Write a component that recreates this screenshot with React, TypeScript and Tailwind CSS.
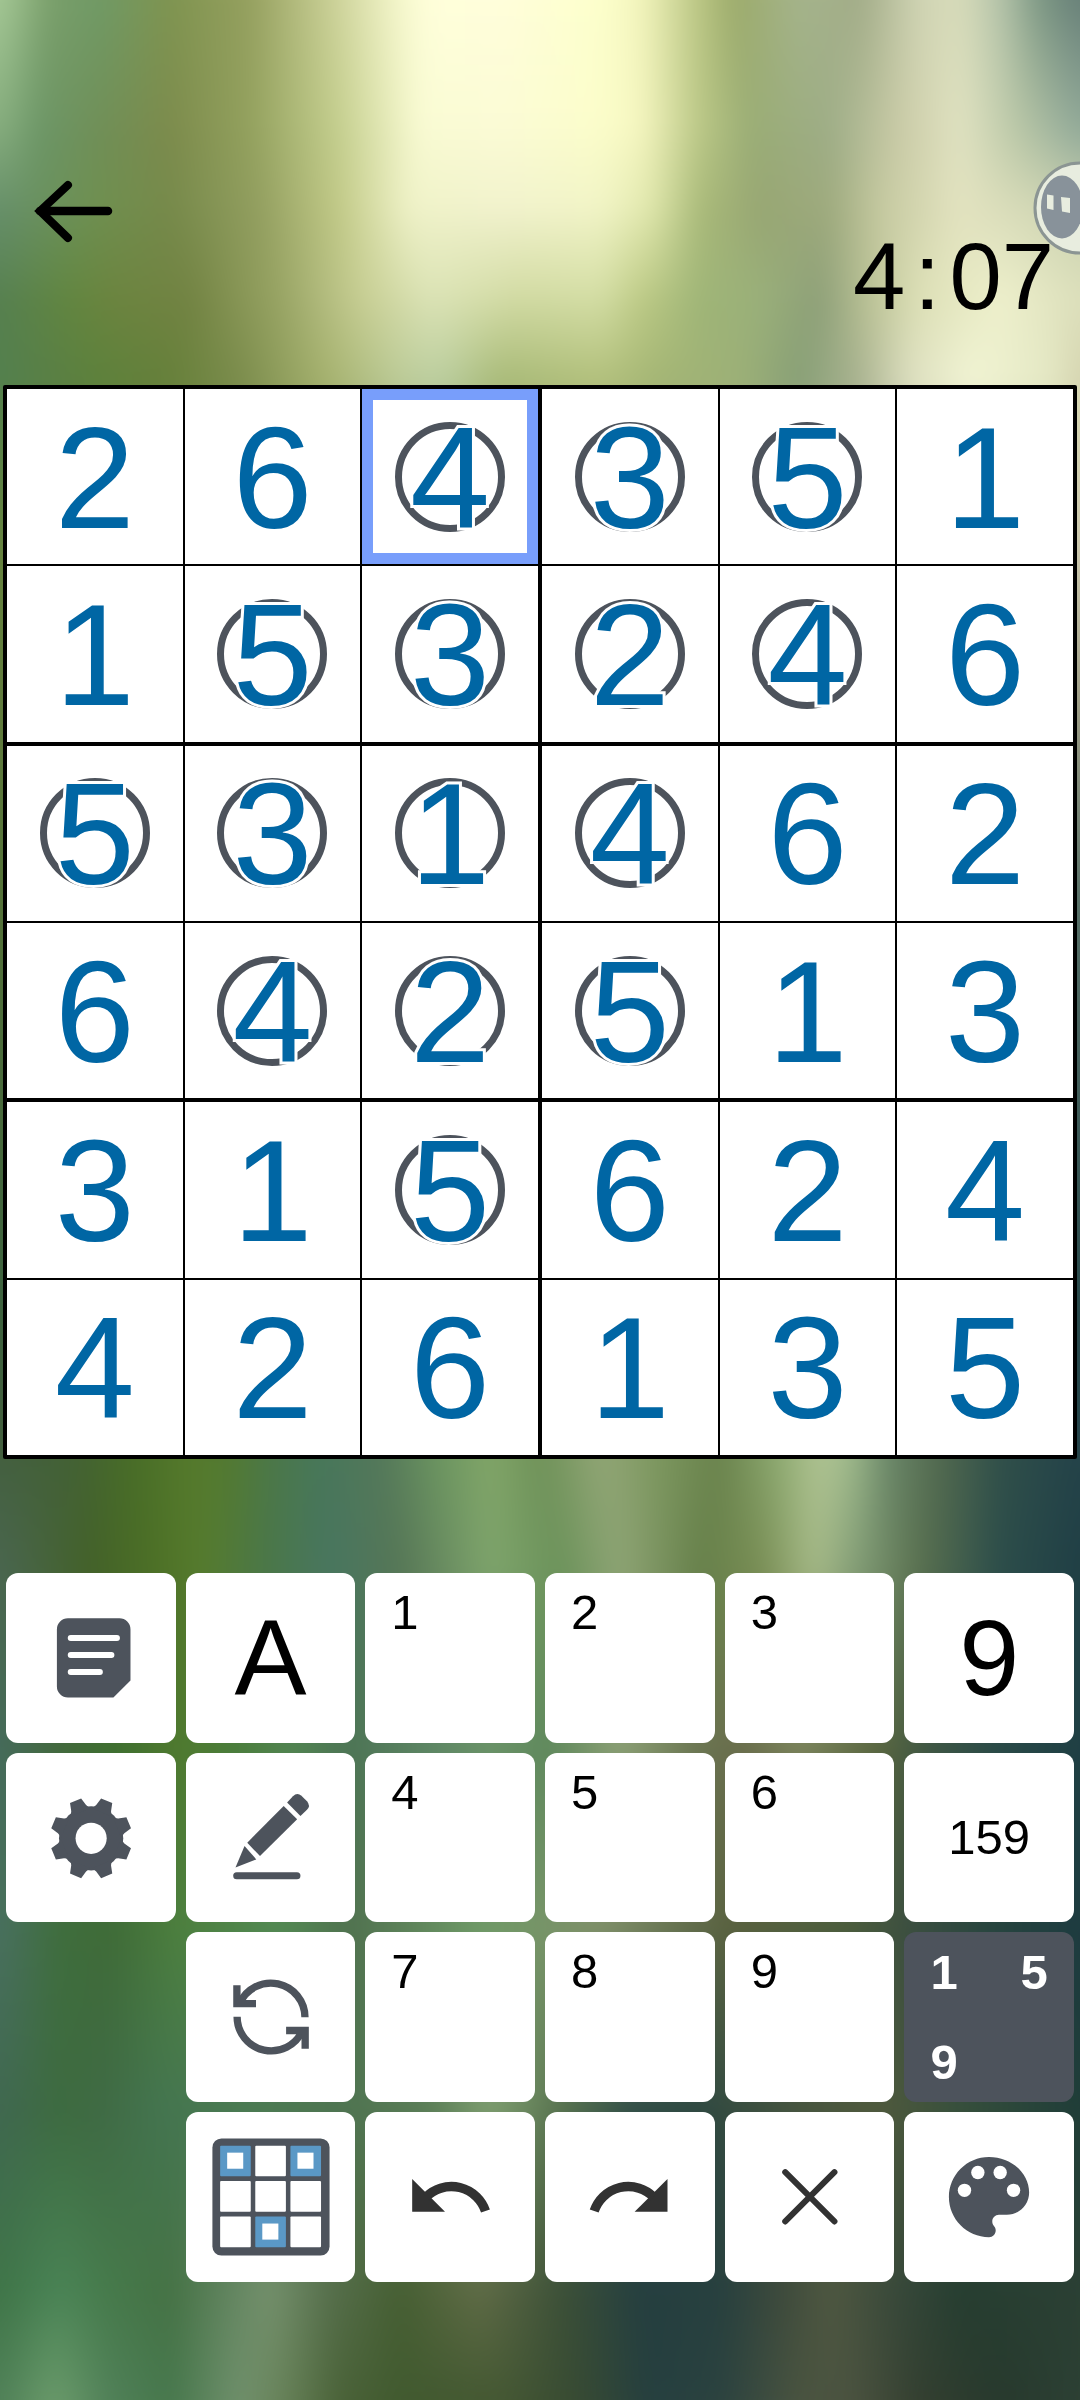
import React, { useState } from 'react'

type Stop = [x: number, color: string]

// Wallpaper: horizontal colour rows that fade into each other from top to bottom
const wallpaper: { y: number; stops: Stop[] }[] = [
  { y: 0, stops: [[0, '#a5c896'], [50, '#7a9f6b'], [100, '#709a66'], [170, '#7f9450'], [250, '#95a05f'], [330, '#c9cf95'], [400, '#f5f7cc'], [430, '#ffffdb'], [500, '#fffedb'], [600, '#fdffcc'], [640, '#f3f5bd'], [700, '#b9c583'], [735, '#9cab6b'], [800, '#a5b48c'], [860, '#a2ac88'], [920, '#d0d4b4'], [960, '#d8dcba'], [1000, '#b5c4aa'], [1040, '#7d9884'], [1080, '#688079']] },
  { y: 130, stops: [[0, '#86ad7e'], [40, '#6c9667'], [100, '#708f57'], [170, '#7c8b4c'], [250, '#93a15e'], [340, '#c5cf8f'], [420, '#f9fbd3'], [500, '#fbfbd5'], [600, '#fbfdca'], [640, '#f5f6c0'], [700, '#bac786'], [750, '#9aad75'], [830, '#9ead87'], [900, '#cacba7'], [960, '#e0e2c1'], [1020, '#b8c6a6'], [1080, '#92aa99']] },
  { y: 210, stops: [[0, '#668f6a'], [60, '#6b9159'], [100, '#6f8f4f'], [170, '#76894a'], [260, '#939f60'], [340, '#c2ca88'], [410, '#eff2c8'], [500, '#f1f2cd'], [600, '#f1f4c6'], [650, '#e0e7ac'], [700, '#a9ba79'], [760, '#97a673'], [830, '#9eaa7e'], [880, '#c5c9a0'], [960, '#e3e3c0'], [1080, '#cad2b0']] },
  { y: 300, stops: [[0, '#568050'], [70, '#628640'], [110, '#6b843f'], [190, '#728343'], [280, '#98a464'], [360, '#c6cd92'], [430, '#dbe3b6'], [520, '#d0d9a1'], [600, '#d3dda4'], [640, '#bdca86'], [700, '#9fb577'], [760, '#9ab07a'], [820, '#8d9f78'], [870, '#bcc397'], [920, '#dde0b7'], [1000, '#eef0cc'], [1080, '#dcdfbb']] },
  { y: 380, stops: [[0, '#53804e'], [60, '#5a7f43'], [90, '#5c813c'], [170, '#66803a'], [240, '#7b8c4c'], [330, '#a7b370'], [400, '#bccb98'], [440, '#bbcea0'], [500, '#a8ba78'], [600, '#b2c07c'], [660, '#a3b574'], [740, '#9cb077'], [800, '#879f76'], [860, '#aab391'], [910, '#dddfc0'], [970, '#f1f4d4'], [1050, '#e4e8c4'], [1080, '#d5d4b0']] },
  { y: 550, stops: [[0, '#66833f'], [1080, '#cdc9b0']] },
  { y: 700, stops: [[0, '#617c3d'], [1080, '#a09f88']] },
  { y: 900, stops: [[0, '#547239'], [1080, '#587068']] },
  { y: 1300, stops: [[0, '#3e633f'], [1080, '#28484a']] },
  { y: 1440, stops: [[0, '#435f3e'], [70, '#436136'], [130, '#486d28'], [190, '#557a2c'], [230, '#537a31'], [270, '#4c7848'], [320, '#47775a'], [380, '#54785a'], [440, '#6d9761'], [490, '#82a668'], [540, '#6f9158'], [600, '#93a777'], [660, '#7c975e'], [720, '#6a834d'], [780, '#90ad74'], [820, '#b2c594'], [850, '#a2bd8e'], [890, '#698669'], [940, '#52694f'], [1000, '#31504a'], [1080, '#24434a']] },
  { y: 1570, stops: [[0, '#4a6650'], [90, '#436129'], [150, '#4c6f26'], [200, '#567b2d'], [270, '#4a774a'], [330, '#487660'], [400, '#567656'], [490, '#7ea46c'], [560, '#6b925a'], [620, '#8ea475'], [700, '#66804a'], [760, '#788d54'], [815, '#a5b987'], [860, '#7f9a74'], [920, '#59704f'], [1000, '#2c4d4a'], [1080, '#203f45']] },
  { y: 1750, stops: [[0, '#456b5c'], [60, '#43693d'], [110, '#3d6f31'], [180, '#507a2f'], [230, '#4a7c3a'], [290, '#528551'], [350, '#4d7455'], [430, '#5d8665'], [490, '#6a9268'], [550, '#5e885c'], [620, '#8ca076'], [700, '#6a7451'], [740, '#696c4c'], [800, '#7b835c'], [880, '#58653f'], [930, '#3e5644'], [1000, '#2a4a48'], [1080, '#1f3f44']] },
  { y: 1930, stops: [[0, '#49705f'], [60, '#3f6e3d'], [110, '#3f6b38'], [180, '#4d803f'], [280, '#538a54'], [350, '#50714f'], [480, '#6f9a67'], [600, '#80906a'], [700, '#5f6a49'], [730, '#59613f'], [850, '#4a5c3d'], [910, '#3b4e40'], [1000, '#26443f'], [1080, '#1d3b40']] },
  { y: 2110, stops: [[0, '#406850'], [60, '#3d6b40'], [100, '#3f6a44'], [160, '#447550'], [250, '#4a7a52'], [350, '#4f7451'], [430, '#5b7e58'], [490, '#7f9f71'], [560, '#58734f'], [630, '#324f48'], [700, '#2e4841'], [800, '#475540'], [880, '#505a3d'], [960, '#37503c'], [1080, '#1f3d38']] },
  { y: 2290, stops: [[0, '#3f7548'], [60, '#4a8456'], [110, '#467a4b'], [170, '#457245'], [230, '#628560'], [270, '#75916d'], [330, '#566f4c'], [400, '#465f33'], [480, '#606c47'], [560, '#3d5138'], [640, '#253f40'], [720, '#27403f'], [780, '#3d4a3c'], [830, '#4f5841'], [900, '#37483a'], [960, '#263e31'], [1080, '#2b4034']] },
  { y: 2400, stops: [[0, '#4f8057'], [55, '#6b9b6b'], [110, '#508058'], [170, '#46774c'], [240, '#70906c'], [280, '#68835a'], [340, '#4a6238'], [400, '#415a2f'], [500, '#455833'], [580, '#374a33'], [650, '#253f3f'], [720, '#2b423f'], [800, '#4a5440'], [850, '#4b5340'], [920, '#333f30'], [1000, '#27392d'], [1080, '#2c4034']] },
]

// The rows run past every edge so that the blur has colour to pull in there
function Wallpaper() {
  return (
    <svg className="absolute inset-0 w-full h-full overflow-visible blur-md" viewBox="0 0 1080 2400" preserveAspectRatio="none" aria-hidden="true">
      <defs>
        <linearGradient id="fade" x1="0" y1="0" x2="0" y2="1">
          <stop offset="0" stopColor="#000" />
          <stop offset="1" stopColor="#fff" />
        </linearGradient>
        {wallpaper.map((row, i) => (
          <linearGradient key={i} id={`row${i}`} gradientUnits="userSpaceOnUse" x1="0" y1="0" x2="1080" y2="0">
            {row.stops.map(([x, color]) => (
              <stop key={x} offset={x / 1080} stopColor={color} />
            ))}
          </linearGradient>
        ))}
        {wallpaper.slice(1).map((row, i) => (
          <mask key={i} id={`mask${i + 1}`} maskUnits="userSpaceOnUse" x="-60" y="-60" width="1200" height="2520">
            <rect x="-60" y={wallpaper[i].y} width="1200" height={row.y - wallpaper[i].y} fill="url(#fade)" />
            <rect x="-60" y={row.y} width="1200" height={2460 - row.y} fill="#fff" />
          </mask>
        ))}
      </defs>
      {wallpaper.map((row, i) => (
        <rect key={i} x="-60" y="-60" width="1200" height="2520" fill={`url(#row${i})`} mask={i > 0 ? `url(#mask${i})` : undefined} />
      ))}
    </svg>
  )
}

// '*' marks a circled cell
const board = [
  ['2', '6', '4*', '3*', '5*', '1'],
  ['1', '5*', '3*', '2*', '4*', '6'],
  ['5*', '3*', '1*', '4*', '6', '2'],
  ['6', '4*', '2*', '5*', '1', '3'],
  ['3', '1', '5*', '6', '2', '4'],
  ['4', '2', '6', '1', '3', '5'],
]

function Cell({ value, label, selected, onSelect }: { value: string; label: string; selected: boolean; onSelect: () => void }) {
  const circled = value.endsWith('*')
  return (
    <button
      onClick={onSelect}
      aria-label={label}
      aria-pressed={selected}
      className={`relative flex items-center justify-center bg-white min-w-0 min-h-0 ${selected ? 'border-[11px] border-[#789efb]' : ''}`}
    >
      {circled && <span className="absolute inset-0 m-auto size-[110px] rounded-full border-[7px] border-[#4d535c]" />}
      <span className="relative pt-1 text-[144px] leading-none text-[#0066a4] [-webkit-text-stroke:6px_white] [paint-order:stroke_fill]">
        {value[0]}
      </span>
    </button>
  )
}

function Board() {
  const [selected, setSelected] = useState('0-2')

  return (
    <section aria-label="Board" className="mx-[3px] aspect-square bg-black rounded-[2px] p-1 grid grid-cols-2 grid-rows-3 gap-1">
      {[0, 1, 2, 3, 4, 5].map(box => {
        const top = Math.floor(box / 2) * 2
        const left = (box % 2) * 3
        return (
          <div key={box} className="grid grid-cols-3 grid-rows-2 gap-0.5 min-h-0">
            {[0, 1, 2, 3, 4, 5].map(i => {
              const r = top + Math.floor(i / 3)
              const c = left + (i % 3)
              const id = `${r}-${c}`
              return (
                <Cell
                  key={id}
                  value={board[r][c]}
                  label={`Row ${r + 1}, column ${c + 1}: ${board[r][c][0]}`}
                  selected={selected === id}
                  onSelect={() => setSelected(id)}
                />
              )
            })}
          </div>
        )
      })}
    </section>
  )
}

function Icon({ children }: { children: React.ReactNode }) {
  return (
    <svg viewBox="0 0 169 169" className="w-full h-full" fill="none" aria-hidden="true">
      {children}
    </svg>
  )
}

const ink = '#4d535c'

const NoteIcon = () => (
  <Icon>
    <path d="M61.7 45H113a11 11 0 0 1 11 11v51l-17 17H61.7a11 11 0 0 1-11-11V56a11 11 0 0 1 11-11z" fill={ink} />
    <path d="M64.5 64.7H110.5M64.5 81.7H105M64.5 98.7H93.5" stroke="#fff" strokeWidth="6" strokeLinecap="round" />
  </Icon>
)

const GearIcon = () => (
  <Icon>
    <circle cx="84.8" cy="85" r="32" fill={ink} />
    {[0, 1, 2, 3, 4, 5, 6, 7].map(k => (
      <path key={k} d="M-10.5 -28L-8 -32.5L-6 -40.5H6L8 -32.5L10.5 -28Z" fill={ink} transform={`translate(84.8 85) rotate(${22.5 + k * 45})`} />
    ))}
    <circle cx="84.8" cy="85" r="15.5" fill="#fff" />
  </Icon>
)

const PencilIcon = () => (
  <Icon>
    <path d="M49.3 114L58.3 92.7L70 106Z" fill={ink} />
    <path d="M61 89.3L97.3 52.7L110.7 66L73.7 102.7Z" fill={ink} />
    <path d="M100.7 49.3L106.5 43Q110.7 39 115 42.5L120.5 48Q124.5 52.5 120.5 56.5L114 62.7Z" fill={ink} />
    <path d="M50.5 122.3H110.5" stroke={ink} strokeWidth="7" strokeLinecap="round" />
  </Icon>
)

const SwapIcon = () => (
  <Icon>
    {[0, 180].map(angle => (
      <g key={angle} transform={`rotate(${angle} 84.7 84.7)`} stroke={ink} strokeWidth="7.3">
        <path d="M118.5 85A34 34 0 0 0 53.5 71" />
        <path d="M50.7 53V71.3H69.7" />
      </g>
    ))}
  </Icon>
)

const GridIcon = () => (
  <Icon>
    <rect x="26.3" y="26.3" width="116.7" height="116.7" rx="9" fill={ink} />
    {[0, 1, 2].map(r =>
      [0, 1, 2].map(c => {
        const marked = (r === 0 && c !== 1) || (r === 2 && c === 1)
        const x = 34 + c * 35
        const y = 33.5 + r * 35.3
        return (
          <g key={`${r}${c}`}>
            <rect x={x} y={y} width="30.5" height="30.5" rx="1" fill={marked ? '#5a98c6' : '#fff'} />
            {marked && <rect x={x + 7} y={y + 7} width="16" height="16" fill="#fff" />}
          </g>
        )
      })
    )}
  </Icon>
)

const UndoIcon = ({ flip = false }: { flip?: boolean }) => (
  <Icon>
    <g transform={flip ? 'translate(169 0) scale(-1 1)' : undefined}>
      <path d="M47 66.7V99.3H79.7Z" fill="#323232" />
      <path d="M120 98.7A35.8 35.8 0 0 0 61 84.5" stroke="#323232" strokeWidth="9.3" />
    </g>
  </Icon>
)

const CloseIcon = () => (
  <Icon>
    <path d="M60 60L109 109M109 60L60 109" stroke="#323232" strokeWidth="6" strokeLinecap="round" />
  </Icon>
)

const PaletteIcon = () => (
  <Icon>
    <g transform="translate(31.4 31.4) scale(4.44)">
      <path d="M12 3c-4.97 0-9 4.03-9 9s4.03 9 9 9c.83 0 1.5-.67 1.5-1.5 0-.39-.15-.74-.39-1.01-.23-.26-.38-.61-.38-.99 0-.83.67-1.5 1.5-1.5H16c2.76 0 5-2.24 5-5 0-4.42-4.03-8-9-8z" fill={ink} />
      <circle cx="6.5" cy="10.5" r="1.5" fill="#fff" />
      <circle cx="9.5" cy="6.5" r="1.5" fill="#fff" />
      <circle cx="14.5" cy="6.5" r="1.5" fill="#fff" />
      <circle cx="17.5" cy="10.5" r="1.5" fill="#fff" />
    </g>
  </Icon>
)

function Key({ label, active = false, children }: { label: string; active?: boolean; children: React.ReactNode }) {
  return (
    <button
      aria-label={label}
      className={`aspect-square min-w-0 rounded-xl overflow-hidden flex items-center justify-center ${active ? 'bg-[#4d535c] text-white' : 'bg-white text-black'}`}
    >
      {children}
    </button>
  )
}

const Digit = ({ n }: { n: number }) => (
  <Key label={`Enter ${n}`}>
    <span className="w-full h-full pt-[15px] pl-[26px] text-left text-[49px] leading-none">{n}</span>
  </Key>
)

function Keypad() {
  return (
    <section aria-label="Keypad" className="grid grid-cols-6 gap-2.5 px-1.5 mt-[114px]">
      <Key label="Notes"><NoteIcon /></Key>
      <Key label="Letters"><span className="text-[108px] leading-none">A</span></Key>
      <Digit n={1} />
      <Digit n={2} />
      <Digit n={3} />
      <Key label="Full digit"><span className="text-[108px] leading-none">9</span></Key>

      <Key label="Settings"><GearIcon /></Key>
      <Key label="Pen"><PencilIcon /></Key>
      <Digit n={4} />
      <Digit n={5} />
      <Digit n={6} />
      <Key label="Centre marks"><span className="text-[49px] leading-none">159</span></Key>

      <div />
      <Key label="Swap"><SwapIcon /></Key>
      <Digit n={7} />
      <Digit n={8} />
      <Digit n={9} />
      <Key label="Corner marks" active>
        <span className="w-full h-full grid grid-cols-2 grid-rows-2 gap-2.5 place-items-center text-[49px] leading-none font-bold">
          <span>1</span>
          <span>5</span>
          <span>9</span>
        </span>
      </Key>

      <div />
      <Key label="Select cells"><GridIcon /></Key>
      <Key label="Undo"><UndoIcon /></Key>
      <Key label="Redo"><UndoIcon flip /></Key>
      <Key label="Delete"><CloseIcon /></Key>
      <Key label="Colours"><PaletteIcon /></Key>
    </section>
  )
}

export default function App() {
  return (
    <div className="relative min-h-screen overflow-hidden font-['Liberation_Sans',Arial,sans-serif]">
      <Wallpaper />

      <main className="relative">
        {/* Header */}
        <header className="flex items-start justify-between pt-[165px] pb-[61px] pl-6 pr-[26px]">
          <button aria-label="Back">
            <svg width="92" height="92" viewBox="0 0 92 92" fill="none" stroke="#000" strokeLinecap="round" aria-hidden="true">
              <path d="M16 46H84" strokeWidth="8.5" />
              <path d="M44 20L16 46L44 73" strokeWidth="8" />
            </svg>
          </button>
          <time className="mt-[65px] text-[94px] leading-none text-black">
            4<span className="mx-[9px]">:</span>07
          </time>
        </header>

        {/* Floating assistant, half off the right edge */}
        <button aria-label="Assistant" className="absolute right-0 top-[161px]">
          <svg width="47" height="94" viewBox="0 0 47 94" aria-hidden="true">
            <circle cx="47" cy="47" r="45" fill="#e8eddf" stroke="#8b9593" strokeWidth="3" />
            <ellipse cx="29" cy="46" rx="21" ry="31.5" fill="#88929a" />
            <path d="M14 33.5l6.500 1V49l-6.500-1.500zM28 36l9 1V52l-8-1.500z" fill="#e8eddf" />
          </svg>
        </button>

        <Board />
        <Keypad />
      </main>
    </div>
  )
}
